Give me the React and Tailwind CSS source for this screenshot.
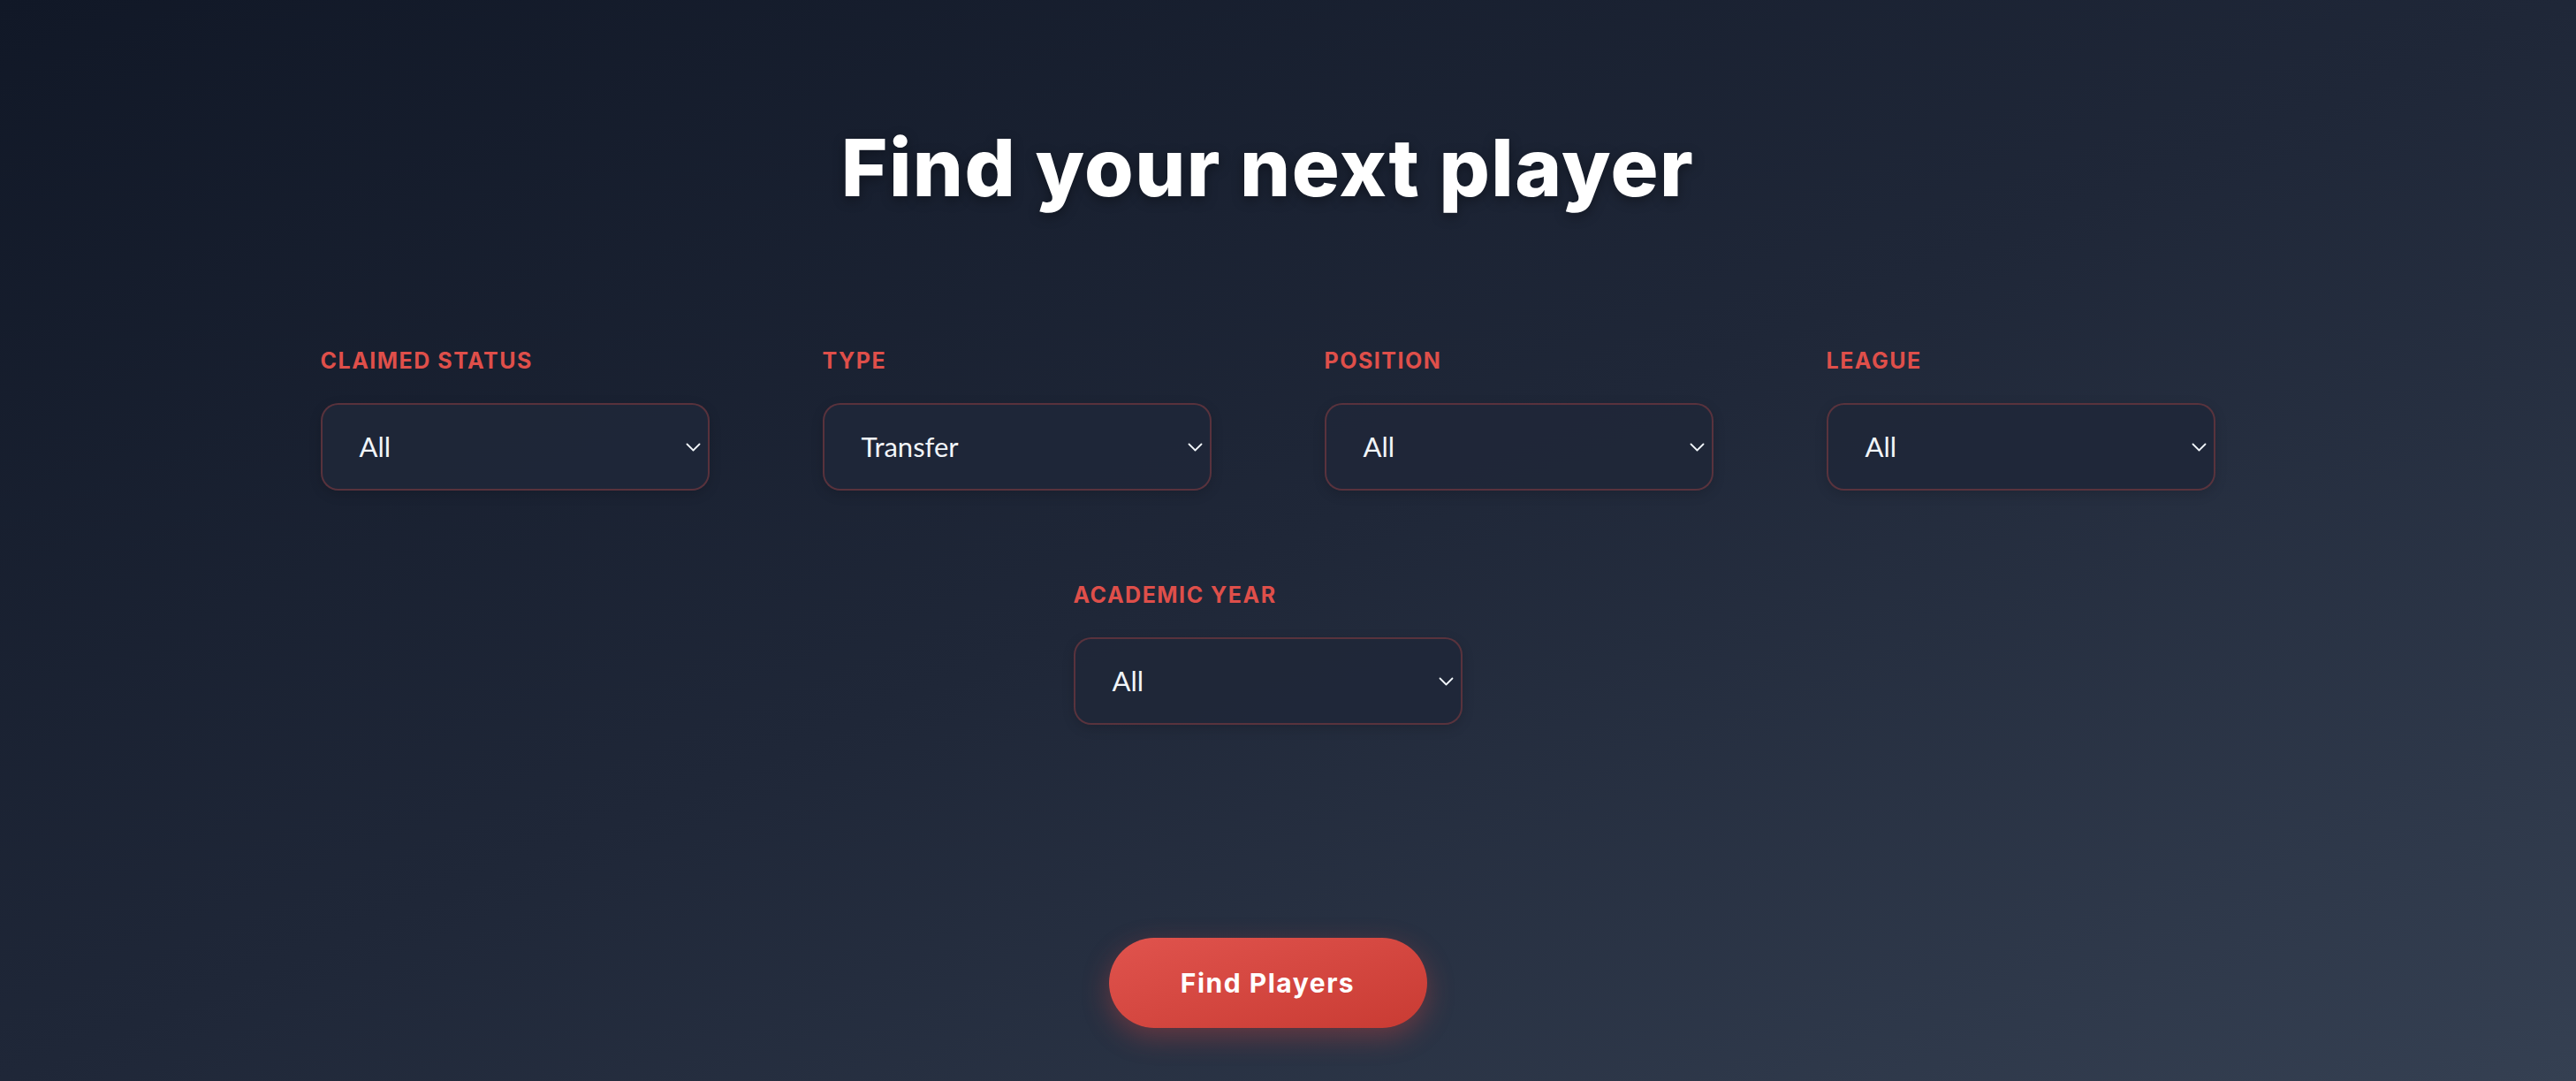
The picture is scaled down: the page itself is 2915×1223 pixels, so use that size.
const FILTERS = [
  { label: 'Claimed Status', value: 'All' },
  { label: 'Type', value: 'Transfer' },
  { label: 'Position', value: 'All' },
  { label: 'League', value: 'All' },
];

function Chevron() {
  return (
    <svg width="17" height="10" viewBox="0 0 17 10" fill="none" className="text-slate-100">
      <path d="M1.5 1.5 L8.5 8.5 L15.5 1.5" stroke="currentColor" strokeWidth="1.8" strokeLinecap="round" strokeLinejoin="round" />
    </svg>
  );
}

function FilterSelect({ label, value }) {
  return (
    <div className="flex flex-col w-[440px]">
      <span className="font-['Inter',sans-serif] text-[25px] leading-none font-bold uppercase tracking-[0.06em] text-[#df4f4a]">
        {label}
      </span>
      <div className="mt-[35px] h-[99px] flex items-center justify-between pl-[42px] pr-[8px] rounded-[20px] border-2 border-[#e04f4a]/30 bg-[#1f2738]/90 shadow-[0_4px_14px_rgba(0,0,0,0.15)]">
        <span className="font-['Lato',sans-serif] text-[31px] text-slate-100">{value}</span>
        <Chevron />
      </div>
    </div>
  );
}

export default function App() {
  return (
    <div className="min-h-screen w-full bg-linear-to-br from-[#111827] via-[#1f2738] to-[#354052] flex flex-col items-center pr-[46px] pb-[60px]">
      {/* Heading */}
      <h1 className="mt-[145px] font-['Inter',sans-serif] text-[90px] leading-none font-extrabold tracking-[0.016em] text-white [text-shadow:0_4px_14px_rgba(0,0,0,0.35)]">
        Find your next player
      </h1>

      {/* Filters */}
      <div className="mt-[161px] grid grid-cols-[repeat(4,440px)] gap-x-[128px]">
        {FILTERS.map((f) => (
          <FilterSelect key={f.label} {...f} />
        ))}
      </div>
      <div className="mt-[106px]">
        <FilterSelect label="Academic Year" value="All" />
      </div>

      {/* Submit */}
      <button className="mt-[241px] w-[360px] h-[102px] rounded-full bg-linear-to-br from-[#e0534d] to-[#c93b33] shadow-[0_10px_30px_rgba(220,70,64,0.35)] font-['Inter',sans-serif] text-[30px] font-bold tracking-[0.05em] text-white">
        Find Players
      </button>
    </div>
  );
}
